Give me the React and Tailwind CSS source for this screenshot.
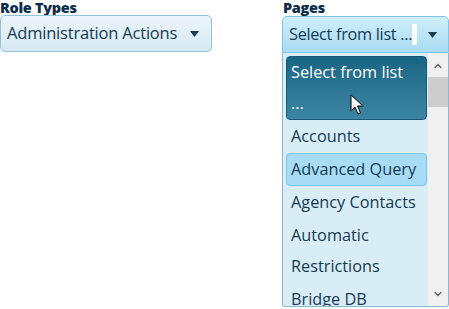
import { ChevronUp, ChevronDown } from "lucide-react";

const pages = [
  { label: "Select from list ...", state: "selected" },
  { label: "Accounts" },
  { label: "Advanced Query", state: "hover" },
  { label: "Agency Contacts" },
  { label: "Automatic Restrictions" },
  { label: "Bridge DB" },
];

const font = { fontFamily: "'Open Sans', 'Noto Sans', sans-serif" };

const Arrow = () => (
  <svg width="9" height="6" viewBox="0 0 9 6" className="shrink-0">
    <path d="M0 0 L9 0 L4.5 6 Z" fill="#1d3a50" />
  </svg>
);

export default function App() {
  return (
    <div className="w-[449px] h-[309px] overflow-hidden bg-white flex text-[#163b54]" style={font}>
      {/* Role Types */}
      <div className="w-[212px] flex flex-col">
        <label className="text-[14.5px] font-extrabold leading-[15px] text-[#0c2c4c] tracking-[-0.3px]">Role Types</label>
        <div className="h-[37px] rounded-[5px] border border-[#93c3da] bg-gradient-to-b from-[#ecf5fa] to-[#d7e9f3] flex items-center pl-[6px] pr-[12px] justify-between">
          <span className="text-[16.5px] tracking-[-0.2px]">Administration Actions</span>
          <Arrow />
        </div>
      </div>

      {/* Pages */}
      <div className="ml-[70px] w-[167px] flex flex-col">
        <label className="pl-[1px] text-[14.5px] font-extrabold leading-[15px] text-[#0c2c4c] tracking-[-0.3px]">Pages</label>
        <div className="mt-[1px] h-[37px] rounded-t-[5px] border border-[#7ec4e6] bg-gradient-to-b from-[#cfeefb] to-[#a9dcf3] flex items-center pl-[6px] pr-[11px] justify-between">
          <span className="text-[16.3px] tracking-[-0.3px] relative whitespace-nowrap">
            Select from list ..
            <span className="absolute right-[-5px] top-[2px] w-[5px] h-[21px] bg-white" />
            .
          </span>
          <Arrow />
        </div>
        <div className="h-[254px] border border-t-0 border-[#8cb7cc] bg-[#d9edf6] flex rounded-b-[3px] overflow-hidden">
          <ul className="flex-1 py-[3px] pl-[3px] pr-[1px] flex flex-col">
            {pages.map((p) => (
              <li
                key={p.label}
                className={
                  p.state === "selected"
                    ? "rounded-[4px] border border-[#16597a] bg-gradient-to-b from-[#1a6584] to-[#3c86a4] text-white pl-[4px] pr-[14px] py-0 leading-[31px] text-[16.3px] relative"
                    : p.state === "hover"
                    ? "rounded-[4px] border border-[#7cc6e9] bg-[#a8dcf4] px-[4px] py-0 leading-[31px] text-[16.3px]"
                    : "px-[5px] py-[1px] leading-[31px] text-[16.3px]"
                }
              >
                {p.label}
                {p.state === "selected" && (
                  <svg width="14" height="22" viewBox="0 0 14 22" className="absolute left-[63px] top-[37px]">
                    <path d="M1 1 L1 17 L5 13 L8 20 L10.5 19 L7.5 12 L13 12 Z" fill="white" stroke="black" strokeWidth="1" />
                  </svg>
                )}
              </li>
            ))}
          </ul>
          <div className="w-[20px] bg-[#f0f0f0] flex flex-col items-center">
            <ChevronUp size={12} strokeWidth={2.5} className="text-[#606060] mt-[7px]" />
            <div className="mt-[5px] w-[20px] h-[30px] bg-[#cdcdcd]" />
            <div className="flex-1" />
            <ChevronDown size={12} strokeWidth={2.5} className="text-[#606060] mb-[6px]" />
          </div>
        </div>
      </div>
    </div>
  );
}
